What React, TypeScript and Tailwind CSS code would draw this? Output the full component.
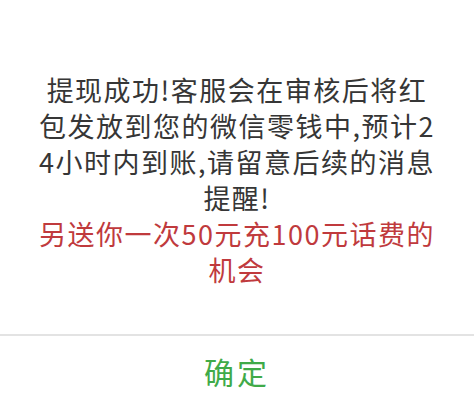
import React from "react";

export default function App() {
  const font = {
    fontFamily: '"Noto Sans CJK SC", "Noto Sans", sans-serif',
  } as React.CSSProperties;
  return (
    <div
      className="w-[474px] h-[408px] bg-white flex flex-col overflow-hidden"
      style={font}
    >
      <div className="pt-[72px] flex flex-col items-center text-[27px] leading-[36px] tracking-[1.5px] text-center">
        <div className="text-[#363636]">
          <div>提现成功!客服会在审核后将红</div>
          <div>包发放到您的微信零钱中,预计2</div>
          <div>4小时内到账,请留意后续的消息</div>
          <div>提醒!</div>
        </div>
        <div className="text-[#c03a3d]">
          <div>另送你一次50元充100元话费的</div>
          <div>机会</div>
        </div>
      </div>
      <div className="mt-[46px] h-[2px] bg-[#e3e3e3]" />
      <div className="h-[80px] flex items-center justify-center">
        <span className="text-[30px] tracking-[3px] text-[#40aa48]">确定</span>
      </div>
    </div>
  );
}
